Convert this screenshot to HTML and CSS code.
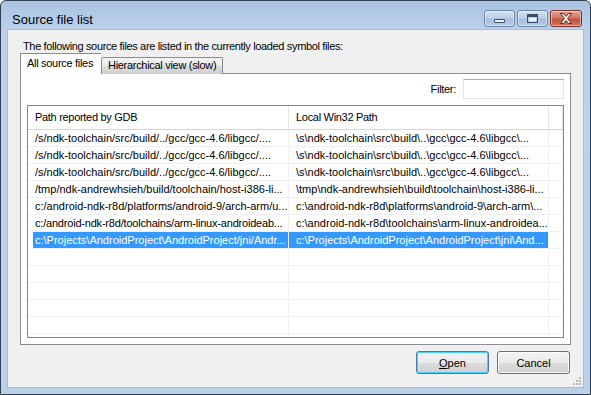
FILE: index.html
```html
<!DOCTYPE html>
<html lang="en">
<head>
  <meta charset="UTF-8" />
  <title>Source file list</title>
  <link rel="stylesheet" href="styles.css">
</head>
<body>
  <div class="window">
    <div class="titlebar">
      <span class="title">Source file list</span>
      <div class="caption-btns">
        <span class="cap"><i class="min-glyph"></i></span>
        <span class="cap"><i class="max-glyph"></i></span>
        <span class="cap close">
          <svg width="14" height="11" viewBox="0 0 14 11">
            <path d="M1.5 0.5h3l2.5 3 2.5-3h3l-4 5 4 5h-3l-2.5-3-2.5 3h-3l4-5z" fill="#fff" stroke="#5a2620" stroke-width="1" stroke-linejoin="round"/>
          </svg>
        </span>
      </div>
    </div>

    <div class="client">
      <p class="intro">The following source files are listed in the currently loaded symbol files:</p>

      <div class="tabs">
        <span class="tab active">All source files</span>
        <span class="tab">Hierarchical view (slow)</span>
      </div>

      <div class="panel">
        <div class="filter-row">
          <label class="filter-label">Filter:</label>
          <input class="filter-input" type="text">
        </div>

        <div class="listview">
          <div class="lv-head">
            <span class="hcell">Path reported by GDB</span>
            <span class="hcell">Local Win32 Path</span>
            <span class="hcell"></span>
          </div>
          <div class="lv-row">
            <span class="cell">/s/ndk-toolchain/src/build/../gcc/gcc-4.6/libgcc/....</span>
            <span class="cell">\s\ndk-toolchain\src\build\..\gcc\gcc-4.6\libgcc\...</span>
            <span class="cell"></span>
          </div>
          <div class="lv-row">
            <span class="cell">/s/ndk-toolchain/src/build/../gcc/gcc-4.6/libgcc/....</span>
            <span class="cell">\s\ndk-toolchain\src\build\..\gcc\gcc-4.6\libgcc\...</span>
            <span class="cell"></span>
          </div>
          <div class="lv-row">
            <span class="cell">/s/ndk-toolchain/src/build/../gcc/gcc-4.6/libgcc/....</span>
            <span class="cell">\s\ndk-toolchain\src\build\..\gcc\gcc-4.6\libgcc\...</span>
            <span class="cell"></span>
          </div>
          <div class="lv-row">
            <span class="cell">/tmp/ndk-andrewhsieh/build/toolchain/host-i386-li...</span>
            <span class="cell">\tmp\ndk-andrewhsieh\build\toolchain\host-i386-li...</span>
            <span class="cell"></span>
          </div>
          <div class="lv-row">
            <span class="cell">c:/android-ndk-r8d/platforms/android-9/arch-arm/u...</span>
            <span class="cell">c:\android-ndk-r8d\platforms\android-9\arch-arm\...</span>
            <span class="cell"></span>
          </div>
          <div class="lv-row">
            <span class="cell tight">c:/android-ndk-r8d/toolchains/arm-linux-androideab...</span>
            <span class="cell">c:\android-ndk-r8d\toolchains\arm-linux-androidea...</span>
            <span class="cell"></span>
          </div>
          <div class="lv-row selected">
            <span class="cell">c:\Projects\AndroidProject\AndroidProject/jni/Andr...</span>
            <span class="cell">c:\Projects\AndroidProject\AndroidProject\jni\And...</span>
            <span class="cell"></span>
          </div>
          <div class="lv-row"><span class="cell"></span><span class="cell"></span><span class="cell"></span></div>
          <div class="lv-row"><span class="cell"></span><span class="cell"></span><span class="cell"></span></div>
          <div class="lv-row"><span class="cell"></span><span class="cell"></span><span class="cell"></span></div>
          <div class="lv-row"><span class="cell"></span><span class="cell"></span><span class="cell"></span></div>
          <div class="lv-row"><span class="cell"></span><span class="cell"></span><span class="cell"></span></div>
          <div class="lv-row"><span class="cell"></span><span class="cell"></span><span class="cell"></span></div>
        </div>
      </div>

      <div class="buttons">
        <button class="btn default"><u>O</u>pen</button>
        <button class="btn">Cancel</button>
      </div>

      <svg class="grip" width="10" height="10" viewBox="0 0 10 10">
        <g fill="#b8b8b8">
          <rect x="7" y="1" width="2" height="2"/>
          <rect x="4" y="4" width="2" height="2"/>
          <rect x="7" y="4" width="2" height="2"/>
          <rect x="1" y="7" width="2" height="2"/>
          <rect x="4" y="7" width="2" height="2"/>
          <rect x="7" y="7" width="2" height="2"/>
        </g>
      </svg>
    </div>
  </div>
</body>
</html>
```

FILE: styles.css
```css
* {
  box-sizing: border-box;
}
body {
  margin: 0;
  background: #fff;
  font-family: "Liberation Sans", Arial, sans-serif;
  font-size: 11px;
  color: #000;
}
.window {
  width: 591px;
  height: 395px;
  display: flex;
  flex-direction: column;
  padding: 0 7px 7px;
  border: 1px solid #2f3f52;
  border-radius: 6px 6px 0 0;
  background: linear-gradient(to bottom, #a9c3e1 0, #bcd2eb 30px, #b9d1ea 100%);
}

/* title bar */
.titlebar {
  height: 29px;
  display: flex;
  justify-content: space-between;
  align-items: flex-start;
  padding-left: 4px;
  margin-right: 1px;
}
.title {
  font-size: 13px;
  line-height: 15px;
  margin-top: 11px;
  color: #000;
}
.caption-btns {
  display: flex;
  gap: 2px;
  margin-top: 9px;
}
.cap {
  width: 31px;
  height: 17px;
  display: flex;
  align-items: center;
  justify-content: center;
  border: 1px solid #6e86a5;
  border-radius: 3px;
  background: linear-gradient(to bottom, #d3e1f1 0, #bcd0e8 45%, #a7bfdd 55%, #b5cae5 100%);
  box-shadow: inset 0 0 0 1px rgba(255, 255, 255, 0.45);
}
.cap.close {
  width: 32px;
  border-color: #7b3129;
  background: linear-gradient(to bottom, #e3a394 0, #d17866 45%, #c3523f 55%, #d0745f 100%);
}
.min-glyph {
  width: 11px;
  height: 4px;
  margin-top: 5px;
  border: 1px solid #3b4f69;
  border-radius: 1px;
  background: #eef3f9;
}
.max-glyph {
  width: 11px;
  height: 9px;
  border: 1px solid #3b4f69;
  border-top-width: 3px;
  background: #eef3f9;
  box-shadow: inset 0 0 0 1px #b9cbe2;
}

/* client area */
.client {
  position: relative;
  flex: 1;
  display: flex;
  flex-direction: column;
  padding: 10px 12px 12px;
  background: #f0f0f0;
  box-shadow: 0 0 0 1px #a4bcd9;
}
.intro {
  margin: 0 0 2px 3px;
  height: 13px;
  line-height: 13px;
  letter-spacing: -0.35px;
}

/* tabs */
.tabs {
  display: flex;
  align-items: flex-end;
  height: 19px;
  margin-bottom: -1px;
  position: relative;
  z-index: 1;
}
.tab {
  height: 17px;
  line-height: 15px;
  padding: 0 4px 0 6px;
  border: 1px solid #898c95;
  border-bottom: none;
  background: linear-gradient(to bottom, #f2f2f2 0, #ebebeb 50%, #dddddd 51%, #cfcfcf 100%);
  letter-spacing: -0.3px;
}
.tab.active {
  width: 81px;
  height: 21px;
  line-height: 19px;
  padding-left: 6px;
  background: #fff;
  border-right: none;
}
.tab:not(.active) {
  width: 122px;
  padding-left: 6px;
  border-radius: 2px 2px 0 0;
}

/* tab page */
.panel {
  height: 272px;
  border: 1px solid #898c95;
  background: #fff;
  padding: 5px 6px 6px;
}
.filter-row {
  height: 20px;
  display: flex;
  justify-content: flex-end;
  align-items: center;
  gap: 7px;
  margin-bottom: 6px;
}
.filter-label {
  letter-spacing: -0.3px;
}
.filter-input {
  width: 101px;
  height: 20px;
  margin: 0;
  border: 1px solid #e2e3ea;
  border-top-color: #abadb3;
  background: #fff;
  outline: none;
}

/* list view */
.listview {
  height: 233px;
  border: 1px solid #828790;
  overflow: hidden;
  background: #fff;
}
.lv-head,
.lv-row {
  display: grid;
  grid-template-columns: 261px 260px 1fr;
}
.lv-head {
  height: 24px;
  border-bottom: 1px solid #d5d5d5;
}
.hcell {
  line-height: 23px;
  padding-left: 7px;
  border-right: 1px solid #e5e5e5;
  letter-spacing: -0.3px;
  white-space: nowrap;
  overflow: hidden;
}
.lv-row {
  height: 17px;
}
.cell {
  line-height: 17px;
  padding-left: 7px;
  border-right: 1px solid #f0f0f0;
  border-bottom: 1px solid #f0f0f0;
  white-space: nowrap;
  overflow: hidden;
}
.cell.tight {
  letter-spacing: -0.2px;
}
.lv-row.selected .cell:first-child {
  margin-left: 5px;
  padding-left: 2px;
  background: #3399ff;
  color: #fff;
}
.lv-row.selected .cell:nth-child(2) {
  background: #3399ff;
  color: #fff;
}

/* buttons */
.buttons {
  display: flex;
  justify-content: flex-end;
  gap: 8px;
  margin-top: 6px;
  padding-right: 1px;
}
.btn {
  width: 73px;
  height: 23px;
  padding: 0;
  font-family: inherit;
  font-size: 11px;
  color: #000;
  border: 1px solid #707070;
  border-radius: 3px;
  background: linear-gradient(to bottom, #f2f2f2 0, #ebebeb 50%, #dddddd 51%, #cfcfcf 100%);
  box-shadow: inset 0 0 0 1px #fcfcfc;
}
.btn.default {
  border-color: #3c7fb1;
  box-shadow: inset 0 0 0 1px #48d1f9;
}
.btn u {
  text-decoration: underline;
}
.grip {
  position: absolute;
  right: 1px;
  bottom: 1px;
}
```
